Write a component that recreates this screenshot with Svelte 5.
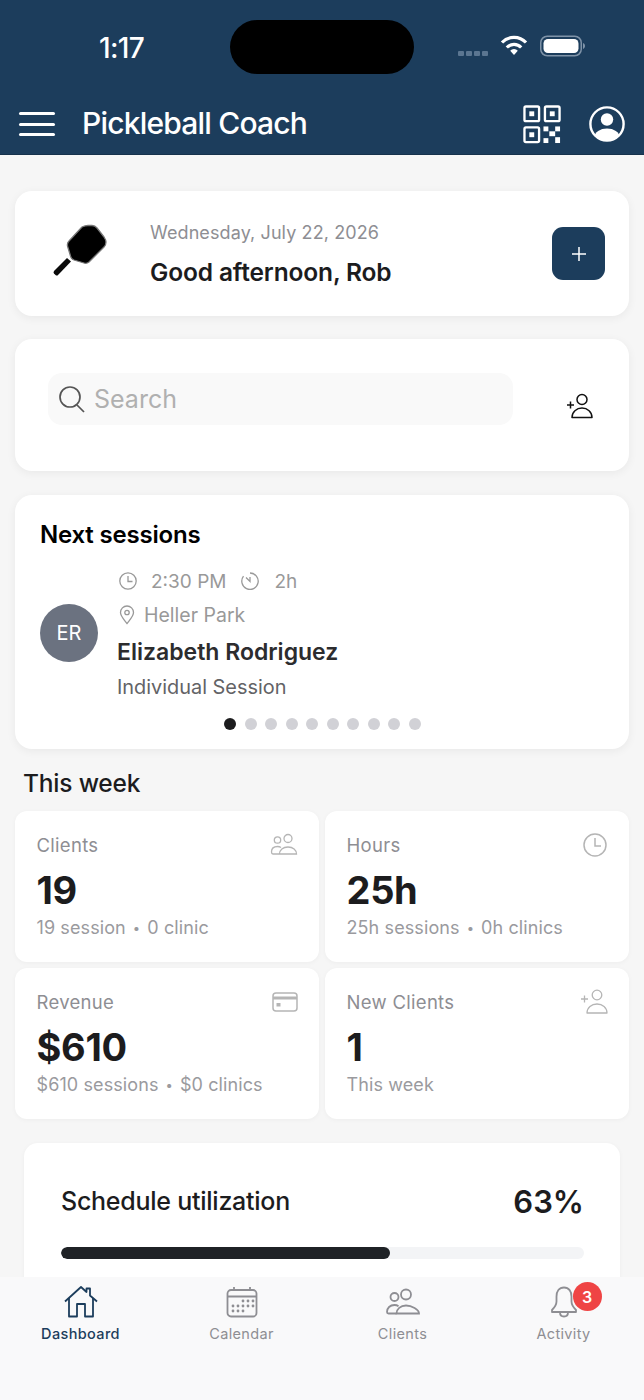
<script>
  const dots = Array.from({ length: 10 }, (_, i) => i);
  const stats = [
    { label: 'Clients', value: '19', a: '19 session', b: '0 clinic', icon: 'users' },
    { label: 'Hours', value: '25h', a: '25h sessions', b: '0h clinics', icon: 'clock' },
    { label: 'Revenue', value: '$610', a: '$610 sessions', b: '$0 clinics', icon: 'card' },
    { label: 'New Clients', value: '1', a: 'This week', b: '', icon: 'add' }
  ];
</script>

<div class="phone">
  <header class="header">
    <div class="status">
      <span class="time">1:17</span>
      <div class="island"></div>
      <div class="status-right">
        <div class="signal"><i></i><i></i><i></i><i></i></div>
        <svg class="wifi" width="28" height="22" viewBox="0 0 28 22" fill="none" stroke="#fff" stroke-width="3.200">
          <path d="M2 8.500a16.500 16.500 0 0 1 24 0" />
          <path d="M6.800 13.500a10 10 0 0 1 14.400 0" />
          <path d="M14 21l-3.800-4.300a5 5 0 0 1 7.600 0z" fill="#fff" stroke="none" />
        </svg>
        <svg class="battery" width="46" height="22" viewBox="0 0 46 22" fill="none">
          <rect x="0.750" y="1.250" width="40.500" height="19.500" rx="6.500" stroke="#7f93a8" stroke-width="1.500" />
          <rect x="3.500" y="4" width="35" height="14" rx="4.500" fill="#fff" />
          <path d="M43 8v6c1.200-.4 2-1.600 2-3s-.8-2.600-2-3z" fill="#7f93a8" />
        </svg>
      </div>
    </div>
    <div class="appbar">
      <div class="burger"><i></i><i></i><i></i></div>
      <span class="title">Pickleball Coach</span>
      <svg class="qr" width="39" height="39" viewBox="0 0 40 40" fill="none" stroke="#fff" stroke-width="2.400">
        <rect x="1.500" y="1.500" width="15" height="15" rx="1.500" />
        <rect x="6.500" y="6.500" width="5" height="5" fill="#fff" stroke="none" />
        <rect x="22.500" y="1.500" width="15" height="15" rx="1.500" />
        <rect x="27.500" y="6.500" width="5" height="5" fill="#fff" stroke="none" />
        <rect x="1.500" y="23" width="15" height="15" rx="1.500" />
        <rect x="6.500" y="28" width="5" height="5" fill="#fff" stroke="none" />
        <g fill="#fff" stroke="none">
          <rect x="21" y="22" width="5" height="5" />
          <rect x="33" y="22" width="5" height="5" />
          <rect x="27" y="27" width="6" height="5" />
          <rect x="21" y="34" width="5" height="5" />
          <rect x="33" y="33" width="5" height="6" />
        </g>
      </svg>
      <svg class="profile" width="36" height="36" viewBox="0 0 36 36" fill="none">
        <defs><clipPath id="pc"><circle cx="18" cy="18" r="16.500" /></clipPath></defs>
        <circle cx="18" cy="13.500" r="6.200" fill="#fff" />
        <ellipse cx="18" cy="31" rx="12.500" ry="8.500" fill="#fff" clip-path="url(#pc)" />
        <circle cx="18" cy="18" r="16.600" stroke="#fff" stroke-width="2.400" />
      </svg>
    </div>
  </header>

  <main class="content">
    <section class="card greet">
      <svg class="paddle" width="60" height="56" viewBox="0 0 60 56">
        <path d="M17 36L4 49q-1 1.500 0 2.500L5.500 53q1.500 1 2.500 0L21 39.500z" fill="#0a0a0a" />
        <path d="M32 5q3-1.500 6-1.500h4q3 0 5 2.500l7 9q2 3 2 5 0 3-2 5L39 40q-2.500 2-5 1l-10-3q-3-1-3.500-4l-3-10q-.5-3 1.500-5z" fill="#000" stroke="#777" stroke-width="1.300" stroke-linejoin="round" />
      </svg>
      <div class="greet-text">
        <div class="date">Wednesday, July 22, 2026</div>
        <div class="hello">Good afternoon, Rob</div>
      </div>
      <button class="plus" aria-label="Add">
        <svg width="16" height="16" viewBox="0 0 16 16" stroke="#fff" stroke-width="1.500"><path d="M8 1v14M1 8h14" /></svg>
      </button>
    </section>

    <section class="card search-card">
      <div class="search">
        <svg width="30" height="30" viewBox="0 0 30 30" fill="none" stroke="#555" stroke-width="1.700">
          <circle cx="13" cy="13" r="10" />
          <path d="M20 21l7 7" />
        </svg>
        <span>Search</span>
      </div>
      <svg class="add-user" width="28" height="26" viewBox="0 0 28 26" fill="none" stroke="#111" stroke-width="1.500">
        <circle cx="16" cy="6.500" r="5" />
        <path d="M6 24.500c0-5.500 4.500-9.500 10-9.500s10 4 10 9.500z" stroke-linejoin="round" />
        <path d="M1 12h7M4.500 8.500v7" />
      </svg>
    </section>

    <section class="card sessions">
      <h2>Next sessions</h2>
      <div class="session">
        <div class="avatar">ER</div>
        <div class="session-info">
          <div class="meta">
            <svg width="20" height="20" viewBox="0 0 20 20" fill="none" stroke="#999" stroke-width="1.300"><circle cx="10" cy="10" r="8.200" /><path d="M10 5v5.500h4.500" /></svg>
            <span class="m1">2:30 PM</span>
            <svg width="20" height="20" viewBox="0 0 20 20" fill="none" stroke="#999" stroke-width="1.300"><path d="M10 2a8.200 8.200 0 1 1-6.500 3.200" /><path d="M10 6v4.500l-4-4" /></svg>
            <span class="m2">2h</span>
          </div>
          <div class="meta place">
            <svg width="18" height="20" viewBox="0 0 18 20" fill="none" stroke="#999" stroke-width="1.300"><path d="M9 18.500C5.500 14 2.500 11 2.500 7.500a6.500 6.500 0 0 1 13 0C15.500 11 12.500 14 9 18.500z" /><circle cx="9" cy="7.500" r="2.200" /></svg>
            <span>Heller Park</span>
          </div>
          <div class="name">Elizabeth Rodriguez</div>
          <div class="kind">Individual Session</div>
        </div>
      </div>
      <div class="dots">
        {#each dots as d}
          <i class:on={d === 0}></i>
        {/each}
      </div>
    </section>

    <h3 class="week">This week</h3>

    <section class="grid">
      {#each stats as s}
        <div class="stat">
          <div class="stat-top">
            <span class="label">{s.label}</span>
            {#if s.icon === 'users'}
              <svg class="ic" width="28" height="24" viewBox="0 0 28 24" fill="none" stroke="#b5b5b5" stroke-width="1.300">
                <circle cx="7.500" cy="7" r="3.200" /><circle cx="18" cy="5.500" r="4" />
                <path d="M1.500 19c0-3.500 2.500-5.500 6-5.500 1.500 0 2.500.3 3.500 1" />
                <path d="M9.500 21c0-4 3.500-7 8.500-7s8.500 3 8.500 7z" />
                <path d="M1.500 19c0 1 .5 2 1.500 2h6" />
              </svg>
            {:else if s.icon === 'clock'}
              <svg class="ic" width="26" height="26" viewBox="0 0 26 26" fill="none" stroke="#b5b5b5" stroke-width="1.500">
                <circle cx="13" cy="13" r="11" /><path d="M13 6v8h6" />
              </svg>
            {:else if s.icon === 'card'}
              <svg class="ic" width="26" height="22" viewBox="0 0 26 22" fill="none" stroke="#b5b5b5" stroke-width="1.500">
                <rect x="1" y="2" width="24" height="18" rx="3" />
                <path d="M1 7h24" stroke-width="3" />
                <rect x="4.500" y="12" width="4" height="3.500" fill="#b5b5b5" stroke="none" />
              </svg>
            {:else}
              <svg class="ic" width="28" height="26" viewBox="0 0 28 26" fill="none" stroke="#b5b5b5" stroke-width="1.300">
                <circle cx="17" cy="6" r="4.800" />
                <path d="M7 24c0-5.500 4.500-9 10-9s10 3.500 10 9z" stroke-linejoin="round" />
                <path d="M1 10h7M4.500 6.500v7" />
              </svg>
            {/if}
          </div>
          <div class="value">{s.value}</div>
          <div class="sub">
            {s.a}{#if s.b}<span class="sep">•</span>{s.b}{/if}
          </div>
        </div>
      {/each}
    </section>

    <section class="util">
      <div class="util-top">
        <span class="util-title">Schedule utilization</span>
        <span class="util-val">63%</span>
      </div>
      <div class="track"><div class="fill" style="width: 63%"></div></div>
    </section>
  </main>

  <nav class="tabs">
    <div class="tab active">
      <svg width="34" height="32" viewBox="0 0 34 32" fill="none" stroke="#1c3d5c" stroke-width="1.800" stroke-linejoin="round">
        <path d="M1 15.500L17 1l5.500 5V2.500h3.500V9.500l7 6" />
        <path d="M5 12v18.500h8V18h8v12.500h8V12" />
      </svg>
      <span>Dashboard</span>
    </div>
    <div class="tab">
      <svg width="32" height="32" viewBox="0 0 32 32" fill="none" stroke="#8e8e93" stroke-width="1.800">
        <rect x="1.500" y="4" width="29" height="26.500" rx="3.500" />
        <path d="M1.500 10.500h29M8 1v4M24 1v4" />
        <g fill="#8e8e93" stroke="none">
          <circle cx="17" cy="15" r="1.400" /><circle cx="22" cy="15" r="1.400" /><circle cx="27" cy="15" r="1.400" />
          <circle cx="7" cy="20" r="1.400" /><circle cx="12" cy="20" r="1.400" /><circle cx="17" cy="20" r="1.400" /><circle cx="22" cy="20" r="1.400" /><circle cx="27" cy="20" r="1.400" />
          <circle cx="7" cy="25" r="1.400" /><circle cx="12" cy="25" r="1.400" /><circle cx="17" cy="25" r="1.400" />
        </g>
      </svg>
      <span>Calendar</span>
    </div>
    <div class="tab">
      <svg width="34" height="32" viewBox="0 0 34 32" fill="none" stroke="#8e8e93" stroke-width="1.800">
        <circle cx="8.500" cy="11" r="4" /><circle cx="20" cy="8.500" r="5" />
        <path d="M1 26c0-4 3-7 7.500-7 1.700 0 2.900.4 4 1.200" />
        <path d="M10.500 27.500c0-4.500 4-8 9.500-8s13 4 13 8z" />
        <path d="M1 26c0 1 .6 1.500 1.500 1.500h8" />
      </svg>
      <span>Clients</span>
    </div>
    <div class="tab">
      <div class="bell">
        <svg width="28" height="32" viewBox="0 0 28 32" fill="none" stroke="#8e8e93" stroke-width="1.800" stroke-linejoin="round">
          <path d="M14 1.500c-5 0-7.500 4-7.500 9v5c0 3-2 6-4.500 8.500v2h24v-2c-2.500-2.500-4.500-5.500-4.500-8.500v-5c0-5-2.500-9-7.500-9z" />
          <path d="M10 26.500c0 2.500 1.700 4 4 4s4-1.500 4-4" />
        </svg>
        <b class="badge">3</b>
      </div>
      <span>Activity</span>
    </div>
  </nav>
</div>

<style>
  :global(body) {
    margin: 0;
    background: #f6f6f6;
  }
  .phone {
    width: 644px;
    height: 1400px;
    display: flex;
    flex-direction: column;
    overflow: hidden;
    font-family: Inter, "Liberation Sans", sans-serif;
    background: #f6f6f6;
  }
  .header {
    flex: none;
    height: 155px;
    background: #1c3d5c;
    border-bottom: 1px solid #16324c;
    box-sizing: border-box;
    color: #fff;
  }
  .status {
    height: 94px;
    display: flex;
    align-items: flex-start;
    box-sizing: border-box;
    padding-top: 20px;
  }
  .time {
    margin-left: 99px;
    margin-top: 14px;
    font-size: 28px;
    line-height: 28px;
    font-weight: 500;
    letter-spacing: -0.700px;
    width: 131px;
  }
  .island {
    width: 184px;
    height: 54px;
    border-radius: 27px;
    background: #000;
  }
  .status-right {
    margin-left: 44px;
    margin-top: 15px;
    display: flex;
    align-items: center;
    height: 24px;
  }
  .signal {
    display: flex;
    gap: 2px;
    margin-right: 12px;
    margin-top: 13px;
  }
  .signal i {
    width: 6px;
    height: 5px;
    background: #5b7691;
    border-radius: 1px;
  }
  .wifi { margin-right: 12px; margin-top: -4px; }
  .battery { margin-top: -3px; }
  .appbar {
    height: 60px;
    display: flex;
    align-items: center;
    padding-left: 19px;
    padding-right: 19px;
    box-sizing: border-box;
  }
  .burger {
    width: 36px;
    display: flex;
    flex-direction: column;
    gap: 7.500px;
    margin-right: 27px;
  }
  .burger i {
    display: block;
    height: 3px;
    background: #fff;
    border-radius: 2px;
  }
  .title {
    flex: 1;
    font-size: 30px;
    font-weight: 500;
    letter-spacing: -0.800px;
    margin-bottom: 2px;
  }
  .qr { margin-right: 27px; }
  .content {
    flex: 1;
    min-height: 0;
    overflow: hidden;
    padding: 36px 15px 0;
    box-sizing: border-box;
    display: flex;
    flex-direction: column;
  }
  .card {
    background: #fff;
    border-radius: 17px;
    box-shadow: 0 2px 10px rgba(0, 0, 0, 0.06);
    flex: none;
  }
  .greet {
    height: 125px;
    display: flex;
    align-items: center;
    padding: 0 24px 0 35px;
    box-sizing: border-box;
  }
  .paddle { margin-bottom: 7px; margin-right: 40px; }
  .greet-text { flex: 1; }
  .date {
    font-size: 18px;
    line-height: 26px;
    color: #8e8e93;
    letter-spacing: 0.100px;
  }
  .hello {
    margin-top: 11px;
    font-size: 24.500px;
    line-height: 30px;
    font-weight: 600;
    color: #1c1c1e;
    letter-spacing: -0.150px;
  }
  .plus {
    width: 53px;
    height: 53px;
    border: 0;
    padding: 0;
    border-radius: 11px;
    background: #1c3d5c;
    display: flex;
    align-items: center;
    justify-content: center;
  }
  .search-card {
    margin-top: 23px;
    height: 132px;
    display: flex;
    align-items: flex-start;
    padding: 34px 0 0 33px;
    box-sizing: border-box;
  }
  .search {
    width: 465px;
    height: 52px;
    background: #f9f9f9;
    border-radius: 14px;
    display: flex;
    align-items: center;
    padding-left: 9px;
    box-sizing: border-box;
    gap: 7px;
  }
  .search span {
    font-size: 25px;
    color: #b0b0b0;
    font-weight: 400;
  }
  .add-user { margin: 20px 0 0 53px; }
  .sessions {
    margin-top: 24px;
    height: 254px;
    box-sizing: border-box;
    padding: 25px 0 0 25px;
  }
  h2 {
    margin: 0;
    font-size: 24px;
    line-height: 29px;
    font-weight: 600;
    color: #000;
    letter-spacing: -0.200px;
  }
  .session {
    display: flex;
    align-items: center;
    margin-top: 20px;
  }
  .avatar {
    width: 58px;
    height: 58px;
    border-radius: 50%;
    background: #6b7280;
    color: #fff;
    font-size: 20px;
    display: flex;
    align-items: center;
    justify-content: center;
    margin-right: 19px;
    margin-top: -3px;
  }
  .meta {
    display: flex;
    align-items: center;
    height: 24px;
    color: #999;
    font-size: 19px;
    padding-left: 1px;
  }
  .m1 { margin-left: 13px; margin-right: 14px; }
  .m2 { margin-left: 14px; }
  .place { margin-top: 10px; }
  .place span { margin-left: 8px; font-size: 19.500px; }
  .name {
    margin-top: 10px;
    font-size: 23px;
    line-height: 30px;
    font-weight: 600;
    color: #2c2c2e;
  }
  .kind {
    margin-top: 7px;
    font-size: 19.900px;
    line-height: 26px;
    color: #636366;
  }
  .dots {
    display: flex;
    gap: 8.500px;
    margin-top: 18px;
    padding-left: 184px;
  }
  .dots i {
    width: 12px;
    height: 12px;
    border-radius: 50%;
    background: #d1d1d6;
  }
  .dots i.on { background: #1c1c1e; }
  .week {
    margin: 19px 0 0 8px;
    font-size: 24.500px;
    line-height: 30px;
    font-weight: 500;
    color: #1c1c1e;
    letter-spacing: -0.200px;
    flex: none;
  }
  .grid {
    flex: none;
    margin-top: 13px;
    display: grid;
    grid-template-columns: 304px 304px;
    grid-auto-rows: 151px;
    column-gap: 6px;
    row-gap: 6px;
  }
  .stat {
    background: #fff;
    border-radius: 12px;
    box-shadow: 0 1px 5px rgba(0, 0, 0, 0.04);
    padding: 20.500px 21px 0 21.500px;
    box-sizing: border-box;
  }
  .stat-top {
    display: flex;
    justify-content: space-between;
    height: 26px;
    align-items: center;
  }
  .label {
    font-size: 18.500px;
    color: #8e8e93;
    letter-spacing: 0.300px;
  }
  .value {
    margin-top: 10.500px;
    font-size: 38px;
    line-height: 44px;
    font-weight: 700;
    color: #1c1c1e;
    letter-spacing: -0.300px;
  }
  .sub {
    margin-top: 3px;
    font-size: 18px;
    line-height: 26px;
    color: #9a9a9e;
    letter-spacing: 0.100px;
  }
  .sep { margin: 0 7px; font-size: 13px; vertical-align: 1px; }
  .util {
    flex: none;
    margin: 24px 9px 0;
    height: 200px;
    background: #fff;
    border-radius: 14px;
    box-shadow: 0 1px 5px rgba(0, 0, 0, 0.04);
    padding: 40px 36px 0 37px;
    box-sizing: border-box;
  }
  .util-top {
    display: flex;
    justify-content: space-between;
    align-items: center;
    height: 36px;
  }
  .util-title {
    font-size: 25px;
    font-weight: 500;
    color: #1c1c1e;
    letter-spacing: -0.250px;
  }
  .util-val {
    font-size: 31px;
    font-weight: 600;
    color: #1c1c1e;
  }
  .track {
    margin-top: 28px;
    height: 12px;
    border-radius: 6px;
    background: #f3f4f6;
    overflow: hidden;
  }
  .fill {
    height: 100%;
    background: #1f2226;
    border-radius: 6px;
  }
  .tabs {
    flex: none;
    height: 123px;
    background: #f9f9fa;
    display: grid;
    grid-template-columns: repeat(4, 1fr);
    box-sizing: border-box;
  }
  .tab {
    display: flex;
    flex-direction: column;
    align-items: center;
    padding-top: 9px;
    color: #8e8e93;
    font-size: 14.500px;
    letter-spacing: 0.350px;
  }
  .tab span { margin-top: 6px; line-height: 20px; }
  .tab.active { color: #1c3d5c; font-weight: 500; }
  .tab svg { display: block; }
  .bell { position: relative; }
  .badge {
    position: absolute;
    left: 23px;
    top: -4px;
    width: 29px;
    height: 29px;
    border-radius: 50%;
    background: #ef4444;
    color: #fff;
    font-size: 16px;
    font-weight: 600;
    display: flex;
    align-items: center;
    justify-content: center;
    letter-spacing: 0;
  }
</style>
